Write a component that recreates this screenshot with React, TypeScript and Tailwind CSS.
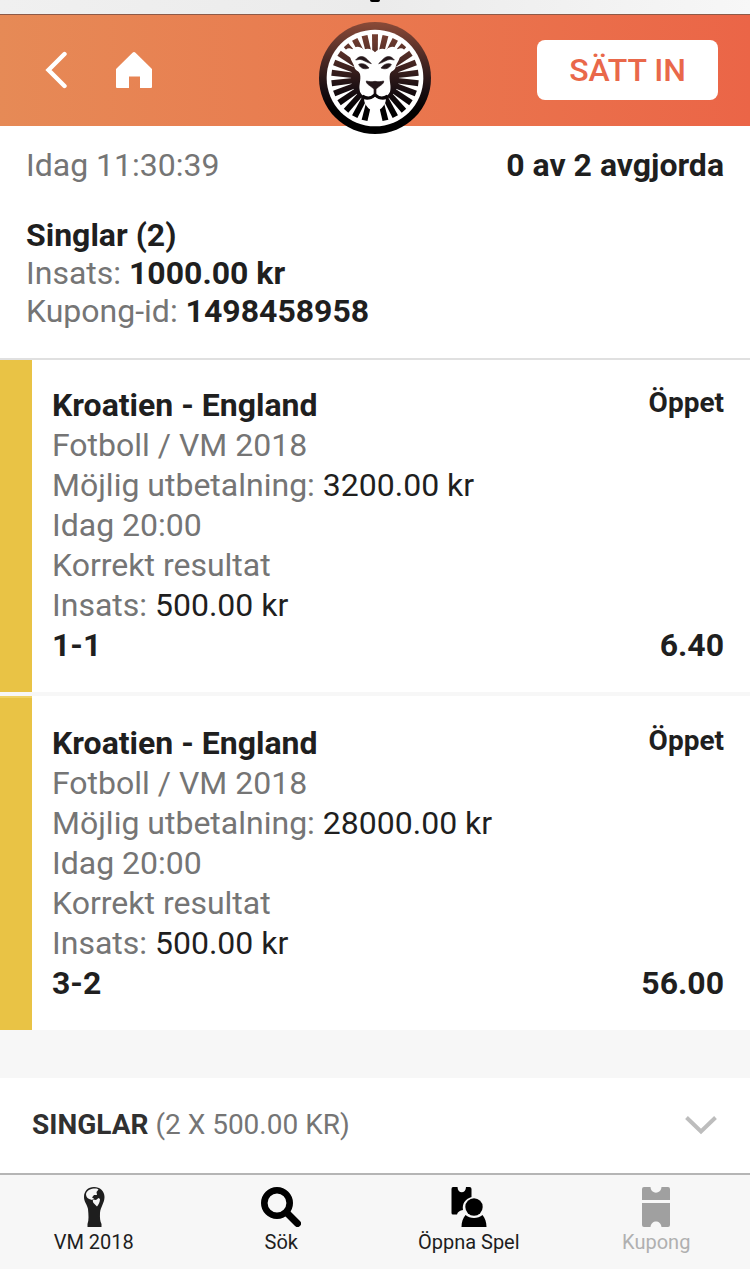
import { type ReactNode } from "react";

// ─── Data ─────────────────────────────────────────────────────────────────────

type Bet = { match: string; league: string; payout: string; time: string; market: string; stake: string; pick: string; odds: string; status: string };

const BETS: Bet[] = [
  {
    match: "Kroatien - England",
    league: "Fotboll / VM 2018",
    payout: "3200.00 kr",
    time: "Idag 20:00",
    market: "Korrekt resultat",
    stake: "500.00 kr",
    pick: "1-1",
    odds: "6.40",
    status: "Öppet"
  },
  {
    match: "Kroatien - England",
    league: "Fotboll / VM 2018",
    payout: "28000.00 kr",
    time: "Idag 20:00",
    market: "Korrekt resultat",
    stake: "500.00 kr",
    pick: "3-2",
    odds: "56.00",
    status: "Öppet"
  }
];

// ─── Icons ────────────────────────────────────────────────────────────────────

const RAYS = Array.from({ length: 26 }, (_, i) => (i * 360) / 26).filter((a) => a !== 180);

function LionLogo() {
  return (
    <svg viewBox="27 66 336 336" className="h-28 w-28" aria-hidden="true">
      <defs>
        <linearGradient id="mane" gradientUnits="userSpaceOnUse" x1="0" y1="66" x2="0" y2="402">
          <stop offset="0" stopColor="#8a4a38" />
          <stop offset="0.3" stopColor="#512c26" />
          <stop offset="0.6" stopColor="#1a0e12" />
          <stop offset="0.8" stopColor="#000000" />
        </linearGradient>
      </defs>
      <circle cx="195" cy="234" r="168" fill="url(#mane)" />
      <circle cx="195" cy="234" r="145" fill="#fff" />
      <circle cx="195" cy="234" r="72" fill="url(#mane)" />
      {RAYS.map((a) => {
        const rad = (a * Math.PI) / 180;
        const s = Math.sin(rad);
        const c = Math.cos(rad);
        const pt = (r: number, w: number) => `${195 + r * s + w * c},${234 - r * c + w * s}`;
        return <polygon key={a} fill="url(#mane)" points={`${pt(60, -8)} ${pt(131, -9)} ${pt(131, 9)} ${pt(60, 8)}`} />;
      })}
      {/* Face */}
      <path
        fill="#fff"
        d="M195 157 C186 146 172 143 161 149 C150 137 134 138 127 148 C116 141 104 147 105 157 C112 157 118 162 121 170 C122 184 132 190 133 202 C135 212 147 213 150 222 C154 240 146 254 149 270 C151 287 167 293 182 290 L195 284 L208 290 C223 293 239 287 241 270 C244 254 236 240 240 222 C243 213 255 212 257 202 C258 190 268 184 269 170 C272 162 278 157 285 157 C286 147 274 141 263 148 C256 138 240 137 229 149 C218 143 204 146 195 157 Z"
      />
      <path fill="#fff" d="M162 298 C176 301 186 297 195 290 C204 297 214 301 228 298 C226 314 217 324 208 330 L195 351 L182 330 C173 324 164 314 162 298 Z" />
      <g fill="#24161a" stroke="#24161a" strokeWidth="2">
        <path d="M137 180 C148 165 162 168 171 178 L184 191 C171 188 160 179 150 178 Z" />
        <path d="M253 180 C242 165 228 168 219 178 L206 191 C219 188 230 179 240 178 Z" />
        <path d="M146 193 C155 188 169 192 177 204 C165 209 151 206 146 193 Z" />
        <path d="M244 193 C235 188 221 192 213 204 C225 209 239 206 244 193 Z" />
        <path d="M169 243 C178 245 186 246 195 244 C204 246 212 245 221 243 C222 252 211 256 203 263 L198 267 V282 H192 V267 L187 263 C179 256 168 252 169 243 Z" />
      </g>
      <path d="M158 287 C173 298 184 294 195 283 C206 294 217 298 232 287" fill="none" stroke="#0b0608" strokeWidth="7" />
    </svg>
  );
}

function BackIcon() {
  return (
    <svg viewBox="0 0 22 38" className="h-[38px] w-[22px]" aria-hidden="true">
      <path d="M19.500 3 L3.500 19 L19.500 35" fill="none" stroke="#fff" strokeWidth="4.400" strokeLinecap="round" />
    </svg>
  );
}

function HomeIcon() {
  return (
    <svg viewBox="0 0 36 36" className="h-9 w-9" aria-hidden="true">
      <path d="M16.500 0.700 Q18 -0.500 19.500 0.700 L36 17 V35 Q36 36 35 36 H24 V24.500 H13 V36 H1 Q0 36 0 35 V17 Z" fill="#fff" />
    </svg>
  );
}

function TrophyIcon() {
  return (
    <svg viewBox="0 0 40 40" className="h-10 w-10" aria-hidden="true">
      <path d="M20 0 C26 0 30.500 4 30.500 10 C30.500 16 26.500 20 26 26 C25.800 31 26 34 27.500 37 V40 H13.500 V37 C15 33 14.500 28 14 22 C13 17 10 15 10 10 C10 4 14 0 20 0 Z" fill="#1e1e1e" />
      <path d="M12 7 C13 3 17 1.500 21 1.500 C23 1.500 24 2 24.500 2.500 L22.500 5 L23 8 L20 8 L18 10.500 L20 11.500 L18 13 C15 12 12 11 12 7 Z" fill="#f7f7f7" />
      <path d="M19 12.500 L22 13 L24.500 11 L26 12 C26 15 24.500 18 23 19.500 L20.500 17 C19 16 18.500 14 19 12.500 Z" fill="#f7f7f7" />
    </svg>
  );
}

function SearchIcon() {
  return (
    <svg viewBox="0 0 40 40" className="h-10 w-10" aria-hidden="true" fill="none" stroke="#000">
      <circle cx="16" cy="16" r="12.700" strokeWidth="6.600" />
      <path d="M26 26 L36.500 36.500" strokeWidth="7" strokeLinecap="round" />
    </svg>
  );
}

function OpenBetsIcon() {
  return (
    <svg viewBox="0 0 40 40" className="h-10 w-10" aria-hidden="true">
      <path d="M4 0 H8.500 C8.500 7 17 7 17 0 H20.500 Q22.500 0 22.500 2 V10 C16 12 13 17 14 23 C11 23.500 8.500 25 8 27.500 H4 Q2.500 27.500 2.500 26 V2 Q2.500 0 4 0 Z" fill="#000" />
      <circle cx="25" cy="20" r="8.700" fill="#000" />
      <path d="M16.500 28 C21 32 29 32 33.500 28 C36 31 37.500 35 37.500 40 H12.500 C12.500 35 14 31 16.500 28 Z" fill="#000" />
    </svg>
  );
}

function CouponIcon() {
  return (
    <svg viewBox="0 0 40 40" className="h-10 w-10" aria-hidden="true" fill="#a0a0a0">
      <path d="M8 0 H14.500 C15 7.500 25 7.500 25.500 0 H32 Q34 0 34 2 V13 H6 V2 Q6 0 8 0 Z" />
      <path d="M6 16 H34 V38 Q34 40 32 40 H25.500 C25 32.500 15 32.500 14.500 40 H8 Q6 40 6 38 Z" />
    </svg>
  );
}

// ─── Bet card ─────────────────────────────────────────────────────────────────

function Line({ label, value }: { label: string; value?: string }) {
  return (
    <p className="text-[#757575]">
      {label}
      {value && <span className="text-[#1f1f1f]"> {value}</span>}
    </p>
  );
}

function BetCard({ bet, first }: { bet: Bet; first: boolean }) {
  return (
    <article className="flex bg-white">
      <div className={`w-8 shrink-0 bg-[#e9c345] ${first ? "" : "border-t-2 border-[#f0d264]"}`} />
      <div className={`min-w-0 flex-1 pr-[26px] pb-[27px] pl-5 text-[32px] leading-10 ${first ? "pt-[25px]" : "pt-[27px]"}`}>
        <div className="flex justify-between">
          <h2 className="font-bold text-[#1f1f1f]">{bet.match}</h2>
          <span className="text-[28px] leading-9 font-bold text-[#1f1f1f]">{bet.status}</span>
        </div>
        <Line label={bet.league} />
        <Line label="Möjlig utbetalning:" value={bet.payout} />
        <Line label={bet.time} />
        <Line label={bet.market} />
        <Line label="Insats:" value={bet.stake} />
        <div className="flex justify-between font-bold text-[#1f1f1f]">
          <span>{bet.pick}</span>
          <span>{bet.odds}</span>
        </div>
      </div>
    </article>
  );
}

// ─── Bottom nav ───────────────────────────────────────────────────────────────

function NavLink({ label, muted, children }: { label: string; muted?: boolean; children: ReactNode }) {
  return (
    <a href="#" className={`flex flex-1 flex-col items-center gap-[3px] text-xl leading-6 ${muted ? "text-[#b0b0b0]" : "text-[#1e1e1e]"}`}>
      {children}
      {label}
    </a>
  );
}

// ─── Page ─────────────────────────────────────────────────────────────────────

export default function App() {
  return (
    <div className="flex min-h-screen flex-col bg-[#f7f7f7] font-[Roboto,sans-serif]">
      {/* Browser bar edge */}
      <div className="flex h-[14px] justify-center bg-linear-to-r from-[#f0f0f0] via-[#ebebeb] to-[#f7f7f7]">
        <span className="h-[2px] w-[10px] rounded-b-full bg-black" />
      </div>

      <header className="relative flex h-28 items-center justify-between border-t border-[#8d5a48] bg-linear-to-r from-[#e68a56] to-[#eb6547] pr-8 pb-[2px] pl-[45px]">
        <div className="flex items-center gap-[49px]">
          <button type="button" aria-label="Tillbaka">
            <BackIcon />
          </button>
          <a href="#" aria-label="Hem">
            <HomeIcon />
          </a>
        </div>
        <a href="#" aria-label="Startsida" className="absolute top-[7px] left-1/2 -translate-x-1/2">
          <LionLogo />
        </a>
        <button type="button" className="h-[60px] rounded-lg bg-white px-8 text-[32px] font-medium text-[#e9684a]">
          SÄTT IN
        </button>
      </header>

      <main>
        <section className="border-b-2 border-[#e0e0e0] bg-white px-[26px] pt-5 pb-7 text-[32px] leading-[38px] text-[#757575]">
          <div className="mb-8 flex justify-between">
            <span>Idag 11:30:39</span>
            <strong className="text-[#1f1f1f]">0 av 2 avgjorda</strong>
          </div>
          <h1 className="font-bold text-[#1f1f1f]">Singlar (2)</h1>
          <p>
            Insats: <strong className="text-[#1f1f1f]">1000.00 kr</strong>
          </p>
          <p>
            Kupong-id: <strong className="text-[#1f1f1f]">1498458958</strong>
          </p>
        </section>

        <div className="flex flex-col gap-1">
          {BETS.map((bet, i) => (
            <BetCard key={bet.odds} bet={bet} first={i === 0} />
          ))}
        </div>

        <button type="button" className="mt-12 flex w-full items-center justify-between bg-white px-8 pt-[27px] pb-7 text-[28px] leading-10 text-[#757575]">
          <span>
            <strong className="text-[#303030]">SINGLAR</strong> (2 X 500.00 KR)
          </span>
          <svg viewBox="0 0 34 20" className="h-5 w-[34px]" aria-hidden="true">
            <path d="M2.500 2.500 L17 16.500 L31.500 2.500" fill="none" stroke="#bdbdbd" strokeWidth="4" />
          </svg>
        </button>
      </main>

      <nav className="flex flex-1 border-t-2 border-[#b5b5b5] bg-[#f7f7f7] pt-3 pb-4">
        <NavLink label="VM 2018">
          <TrophyIcon />
        </NavLink>
        <NavLink label="Sök">
          <SearchIcon />
        </NavLink>
        <NavLink label="Öppna Spel">
          <OpenBetsIcon />
        </NavLink>
        <NavLink label="Kupong" muted>
          <CouponIcon />
        </NavLink>
      </nav>
    </div>
  );
}
